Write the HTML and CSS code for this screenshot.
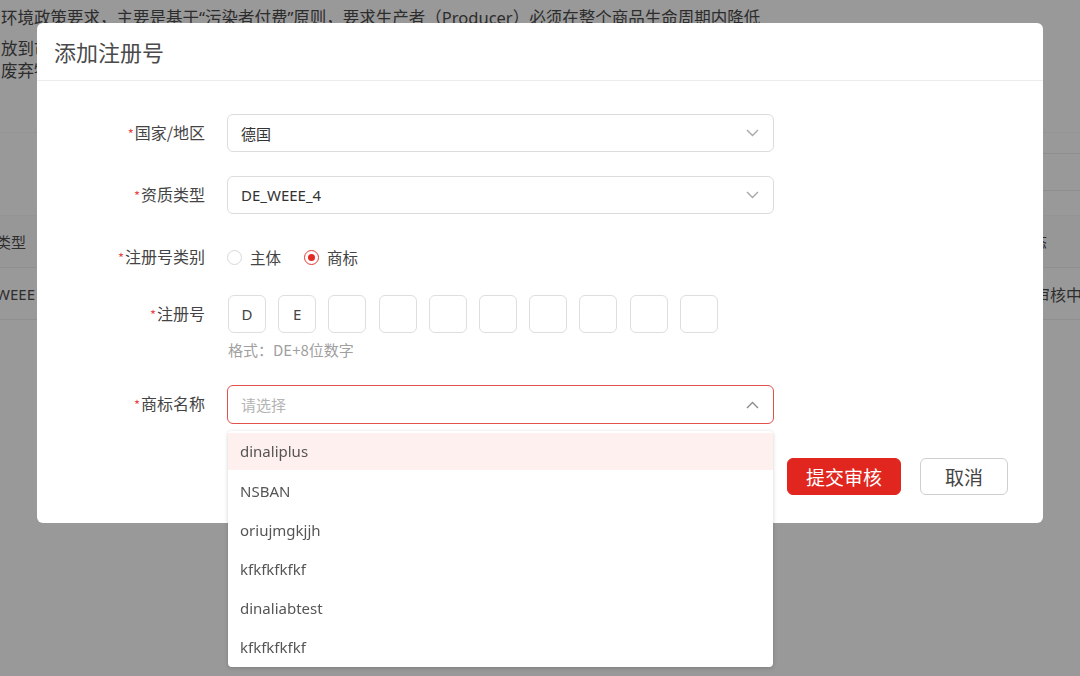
FILE: index.html
```html
<!DOCTYPE html>
<html lang="zh-CN">
<head>
<meta charset="utf-8">
<title>添加注册号</title>
<link rel="stylesheet" href="styles.css">
</head>
<body>
<div class="page">
  <div class="intro">
    <p class="bg-line l1">环境政策要求，主要是基于“污染者付费”原则，要求生产者（Producer）必须在整个商品生命周期内降低</p>
    <p class="bg-line l2">放到市场上的电子电气设备</p>
    <p class="bg-line l3">废弃物的处理与回收</p>
  </div>
  <div class="tab-line"></div>
  <div class="filter-bar"></div>
  <div class="bg-table">
    <div class="bg-row head"><span class="cell c1">类型</span><span class="cell c2">状态</span></div>
    <div class="bg-row"><span class="cell c1">WEEE</span><span class="cell c3">审核中</span></div>
  </div>
</div>

<div class="modal">
  <div class="modal-head">添加注册号</div>
  <div class="modal-body">
    <div class="row r1">
      <label class="lbl"><span class="star">*</span>国家/地区</label>
      <div class="select"><span class="val">德国</span>
        <svg class="chev" width="13" height="8" viewBox="0 0 13 8"><polyline points="1,1 6.5,6.5 12,1" fill="none" stroke="#a8a8a8" stroke-width="1.4"/></svg>
      </div>
    </div>
    <div class="row r2">
      <label class="lbl"><span class="star">*</span>资质类型</label>
      <div class="select"><span class="val">DE_WEEE_4</span>
        <svg class="chev" width="13" height="8" viewBox="0 0 13 8"><polyline points="1,1 6.5,6.5 12,1" fill="none" stroke="#a8a8a8" stroke-width="1.4"/></svg>
      </div>
    </div>
    <div class="row r3">
      <label class="lbl"><span class="star">*</span>注册号类别</label>
      <div class="radios">
        <span class="radio"><span class="dot"></span>主体</span>
        <span class="radio on"><span class="dot"></span>商标</span>
      </div>
    </div>
    <div class="row r4">
      <label class="lbl"><span class="star">*</span>注册号</label>
      <div class="codes">
        <span class="code">D</span><span class="code">E</span><span class="code"></span><span class="code"></span><span class="code"></span><span class="code"></span><span class="code"></span><span class="code"></span><span class="code"></span><span class="code"></span>
      </div>
    </div>
    <div class="hint">格式：DE+8位数字</div>
    <div class="row r5">
      <label class="lbl"><span class="star">*</span>商标名称</label>
      <div class="select open"><span class="ph">请选择</span>
        <svg class="chev" width="13" height="8" viewBox="0 0 13 8"><polyline points="1,7 6.5,1.5 12,7" fill="none" stroke="#8a8a8a" stroke-width="1.4"/></svg>
        <ul class="dropdown">
          <li class="hover">dinaliplus</li>
          <li>NSBAN</li>
          <li>oriujmgkjjh</li>
          <li>kfkfkfkfkf</li>
          <li>dinaliabtest</li>
          <li>kfkfkfkfkf</li>
        </ul>
      </div>
    </div>
  </div>
  <div class="modal-foot">
    <button class="btn primary">提交审核</button>
    <button class="btn">取消</button>
  </div>
</div>
</body>
</html>
```

FILE: styles.css
```css
* { box-sizing: border-box; }
html, body { margin: 0; padding: 0; }
body {
  width: 1080px;
  height: 676px;
  overflow: hidden;
  background: #999999;
  font-family: "Noto Sans", "Noto Sans CJK SC", sans-serif;
  color: #333;
}

/* background page (dimmed) */
.page { position: relative; height: 676px; overflow: hidden; }
.intro { padding-top: 7px; padding-left: 1px; }
.bg-line {
  margin: 0;
  font-size: 16.5px;
  line-height: 22px;
  color: #2c2c2c;
  white-space: nowrap;
}
.bg-line.l2 { margin-top: 9px; }
.tab-line { margin-top: 50px; height: 1px; background: #959595; }
.filter-bar {
  margin-top: 20px;
  margin-left: 990px;
  height: 38px;
  border-top: 1px solid #8e8e8e;
  border-bottom: 1px solid #8e8e8e;
}
.bg-table { margin-top: 24px; }
.bg-row {
  height: 52px;
  border-bottom: 1px solid #8f8f8f;
  display: flex;
  align-items: center;
  justify-content: space-between;
  font-size: 15px;
  color: #2e2e2e;
}
.bg-row.head { background: #979797; height: 53px; border-top: 1px solid #949494; }
.bg-row .c1 { margin-left: -4px; }
.bg-row .c2 { margin-right: 33px; }
.bg-row .c3 { margin-right: -2px; font-size: 16px; }

/* modal */
.modal {
  position: fixed;
  left: 37px;
  top: 23px;
  width: 1006px;
  height: 500px;
  background: #fff;
  border-radius: 6px;
}
.modal-head {
  height: 58px;
  line-height: 57px;
  padding-left: 17px;
  font-size: 22px;
  color: #4a4a4a;
  border-bottom: 1px solid #ececec;
  font-family: "Noto Sans CJK SC", sans-serif;
}
.modal-body { padding-top: 33px; }
.row { display: flex; align-items: center; }
.r1 { height: 38px; }
.r2 { height: 38px; margin-top: 24px; }
.r3 { height: 38px; margin-top: 24px; }
.r4 { height: 38px; margin-top: 19px; }
.r5 { height: 39px; margin-top: 26px; }
.lbl {
  width: 168px;
  text-align: right;
  margin-right: 22px;
  font-size: 16px;
  color: #444;
  font-family: "Noto Sans CJK SC", sans-serif;
  line-height: 20px;
  margin-top: -1px;
}
.star { color: #e8474a; font-size: 13px; margin-right: 1px; }

.select {
  position: relative;
  width: 547px;
  height: 100%;
  border: 1px solid #dcdcdc;
  border-radius: 6px;
  display: flex;
  align-items: center;
  padding-left: 13px;
  font-size: 15px;
  color: #333;
}
.select.open { border-color: #e2504b; }
.ph { color: #b4b4b4; font-family: "Noto Sans CJK SC", sans-serif; }
.chev { position: absolute; right: 14px; top: 50%; margin-top: -4px; }

.radios { display: flex; align-items: center; font-size: 15.5px; color: #444; font-family: "Noto Sans CJK SC", sans-serif; }
.radio { display: flex; align-items: center; }
.radio + .radio { margin-left: 23px; }
.dot {
  width: 15px;
  height: 15px;
  border-radius: 50%;
  border: 1px solid #d8d8d8;
  margin-right: 8px;
  position: relative;
}
.radio.on .dot { border-color: #e33a32; }
.radio.on .dot::after {
  content: "";
  position: absolute;
  left: 3px;
  top: 3px;
  width: 7px;
  height: 7px;
  border-radius: 50%;
  background: #e32b24;
}

.codes { display: flex; gap: 12.2px; margin-left: 1px; }
.code {
  width: 38px;
  height: 38px;
  border: 1px solid #dedede;
  border-radius: 6px;
  display: flex;
  align-items: center;
  justify-content: center;
  font-size: 15px;
  color: #444;
}
.hint {
  margin-top: 8px;
  margin-left: 191px;
  height: 18px;
  line-height: 18px;
  font-size: 15px;
  color: #a0a0a0;
  font-family: "Noto Sans CJK SC", sans-serif;
}

.dropdown {
  position: absolute;
  left: 0;
  top: 45px;
  width: 545px;
  margin: 0;
  padding: 2px 0 0;
  list-style: none;
  background: #fff;
  border-radius: 4px;
  box-shadow: 0 1px 4px rgba(0,0,0,0.18);
  z-index: 5;
}
.dropdown li {
  height: 39px;
  line-height: 38px;
  padding-left: 12px;
  font-size: 15px;
  color: #555;
}
.dropdown li.hover { background: #fdf0ef; height: 37px; line-height: 37px; margin-bottom: 2px; }

.modal-foot {
  display: flex;
  justify-content: flex-end;
  gap: 19px;
  padding-right: 35px;
  margin-top: 34px;
}
.btn {
  height: 37px;
  border-radius: 6px;
  font-size: 19px;
  font-family: "Noto Sans CJK SC", sans-serif;
  border: 1px solid #cfcfcf;
  background: #fff;
  color: #444;
  width: 88px;
  padding: 0;
  line-height: 35px;
}
.btn.primary {
  width: 114px;
  background: #e0261e;
  border-color: #e0261e;
  color: #fff;
}
```
